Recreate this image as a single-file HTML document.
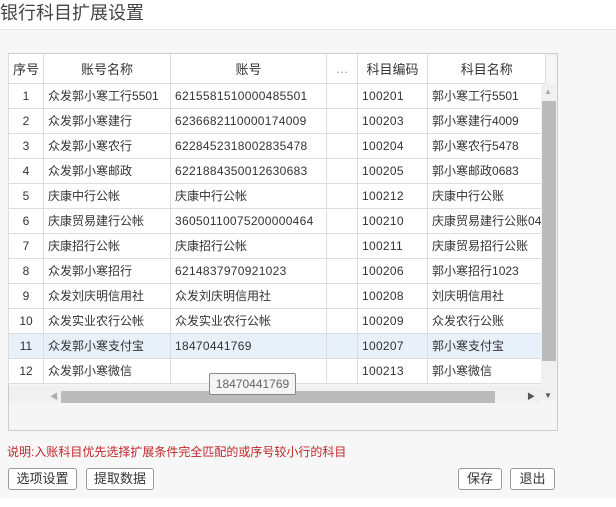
<!DOCTYPE html>
<html><head><meta charset="utf-8"><style>
*{margin:0;padding:0;box-sizing:border-box}
body{width:616px;height:507px;background:#f7f7f7;font-family:"Liberation Sans","Noto Sans CJK SC",sans-serif;font-size:12px;color:#333;position:relative;overflow:hidden}
.title{position:absolute;left:0;top:0;width:616px;height:30px;background:#fff;border-bottom:1px solid #e3e3e3;font-size:18px;line-height:26px;color:#444;padding-left:0}
.box{position:absolute;left:8px;top:53px;width:550px;height:378px;border:1px solid #ccc;background:#f5f5f5}
table{position:absolute;left:-1px;top:0;border-collapse:collapse;table-layout:fixed;background:#fff}
td,th{border:1px solid #ddd;height:25px;white-space:nowrap;overflow:hidden;font-weight:normal;padding:0 4px;font-size:12px}
th{height:29px;font-size:13px;text-align:center;background:#fff;border-top:none}
td.n{text-align:center}
td.d{letter-spacing:0.3px}
tr.sel td{background:#e8f0fa}
.vs{position:absolute;left:532px;top:30px;width:16px;height:316px;background:#f0f0f0}
.vth{position:absolute;left:533px;top:47px;width:14px;height:260px;background:#bbb}
.hs{position:absolute;left:0;top:332px;width:532px;height:17px;background:#f0f0f0}
.hth{position:absolute;left:52px;top:337px;width:434px;height:12px;background:#bbb}
.tip{position:absolute;left:209px;top:373px;width:87px;height:22px;border:1px solid #888;border-radius:2px;background:#f5f5f5;color:#666;font-size:12px;line-height:20px;text-align:center}
.note{position:absolute;left:7px;top:443px;color:#c0262a;font-size:12px}
.btn{position:absolute;top:468px;height:22px;border:1px solid #999;border-radius:3px;background:#fff;font-size:13px;line-height:20px;text-align:center;color:#333}
</style></head><body>
<div class="title">银行科目扩展设置</div>
<div class="box">
<table>
<colgroup><col style="width:35px"><col style="width:127px"><col style="width:156px"><col style="width:31px"><col style="width:70px"><col style="width:113px"></colgroup>
<tr><th>序号</th><th>账号名称</th><th>账号</th><th style="color:#999">…</th><th>科目编码</th><th>科目名称</th></tr>
<tr><td class="n">1</td><td>众发郭小寒工行5501</td><td class="d">6215581510000485501</td><td></td><td class="d">100201</td><td>郭小寒工行5501</td></tr>
<tr><td class="n">2</td><td>众发郭小寒建行</td><td class="d">6236682110000174009</td><td></td><td class="d">100203</td><td>郭小寒建行4009</td></tr>
<tr><td class="n">3</td><td>众发郭小寒农行</td><td class="d">6228452318002835478</td><td></td><td class="d">100204</td><td>郭小寒农行5478</td></tr>
<tr><td class="n">4</td><td>众发郭小寒邮政</td><td class="d">6221884350012630683</td><td></td><td class="d">100205</td><td>郭小寒邮政0683</td></tr>
<tr><td class="n">5</td><td>庆康中行公帐</td><td>庆康中行公帐</td><td></td><td class="d">100212</td><td>庆康中行公账</td></tr>
<tr><td class="n">6</td><td>庆康贸易建行公帐</td><td class="d">36050110075200000464</td><td></td><td class="d">100210</td><td>庆康贸易建行公账04</td></tr>
<tr><td class="n">7</td><td>庆康招行公帐</td><td>庆康招行公帐</td><td></td><td class="d">100211</td><td>庆康贸易招行公账</td></tr>
<tr><td class="n">8</td><td>众发郭小寒招行</td><td class="d">6214837970921023</td><td></td><td class="d">100206</td><td>郭小寒招行1023</td></tr>
<tr><td class="n">9</td><td>众发刘庆明信用社</td><td>众发刘庆明信用社</td><td></td><td class="d">100208</td><td>刘庆明信用社</td></tr>
<tr><td class="n">10</td><td>众发实业农行公帐</td><td>众发实业农行公帐</td><td></td><td class="d">100209</td><td>众发农行公账</td></tr>
<tr class="sel"><td class="n">11</td><td>众发郭小寒支付宝</td><td class="d">18470441769</td><td></td><td class="d">100207</td><td>郭小寒支付宝</td></tr>
<tr><td class="n">12</td><td>众发郭小寒微信</td><td></td><td></td><td class="d">100213</td><td>郭小寒微信</td></tr>
</table>
<div class="vs"></div><div class="vth"></div>
<div class="hs"></div><div class="hth"></div>
<div style="position:absolute;left:41px;top:337px;font-size:8px;color:#aaa">◀</div>
<div style="position:absolute;left:518px;top:337px;font-size:8px;color:#555">▶</div>
<div style="position:absolute;left:535px;top:337px;font-size:8px;color:#555">▼</div>
<div style="position:absolute;left:535px;top:33px;font-size:8px;color:#aaa">▲</div>
</div>
<div class="tip">18470441769</div>
<div class="note">说明:入账科目优先选择扩展条件完全匹配的或序号较小行的科目</div>
<div class="btn" style="left:8px;width:69px">选项设置</div>
<div class="btn" style="left:86px;width:68px">提取数据</div>
<div class="btn" style="left:458px;width:44px">保存</div>
<div class="btn" style="left:510px;width:45px">退出</div>
<div style="position:absolute;left:0;top:498px;width:616px;height:9px;background:#fff"></div>
</body></html>
